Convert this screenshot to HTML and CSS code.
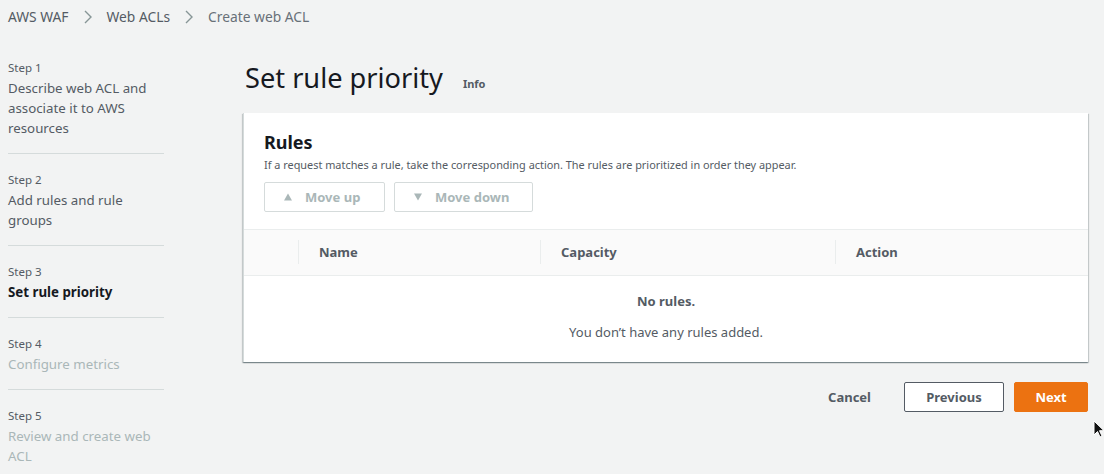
FILE: index.html
```html
<!DOCTYPE html>
<html lang="en">
<head>
<meta charset="utf-8">
<title>Set rule priority</title>
<link rel="stylesheet" href="styles.css">
</head>
<body>
<nav class="crumbs">
  <span class="crumb">AWS WAF</span>
  <svg class="chev" viewBox="0 0 10 14" width="10" height="14"><path d="M2 1l6 6-6 6" fill="none" stroke="#879596" stroke-width="1.4"/></svg>
  <span class="crumb">Web ACLs</span>
  <svg class="chev" viewBox="0 0 10 14" width="10" height="14"><path d="M2 1l6 6-6 6" fill="none" stroke="#879596" stroke-width="1.4"/></svg>
  <span class="crumb current">Create web ACL</span>
</nav>
<div class="layout">
  <aside class="steps">
    <div class="step"><div class="step-label">Step 1</div><div class="step-title">Describe web ACL and associate it to AWS resources</div></div>
    <div class="step"><div class="step-label">Step 2</div><div class="step-title">Add rules and rule groups</div></div>
    <div class="step"><div class="step-label">Step 3</div><div class="step-title active">Set rule priority</div></div>
    <div class="step"><div class="step-label">Step 4</div><div class="step-title disabled">Configure metrics</div></div>
    <div class="step last"><div class="step-label">Step 5</div><div class="step-title disabled">Review and create web ACL</div></div>
  </aside>
  <main class="main">
    <div class="page-head"><h1>Set rule priority</h1><span class="info">Info</span></div>
    <section class="card">
      <div class="card-head">
        <h2>Rules</h2>
        <p class="desc">If a request matches a rule, take the corresponding action. The rules are prioritized in order they appear.</p>
        <div class="tools">
          <button class="btn-dis"><svg viewBox="0 0 10 10" width="10" height="10"><path d="M5 1.5L9 8.5H1z" fill="#aab7b8"/></svg>Move up</button>
          <button class="btn-dis"><svg viewBox="0 0 10 10" width="10" height="10"><path d="M1 1.5h8L5 8.5z" fill="#aab7b8"/></svg>Move down</button>
        </div>
      </div>
      <div class="thead">
        <div class="th sel"></div>
        <div class="th c1"><span>Name</span></div>
        <div class="th c2"><span>Capacity</span></div>
        <div class="th c3"><span>Action</span></div>
      </div>
      <div class="empty">
        <div class="empty-title">No rules.</div>
        <div class="empty-text">You don’t have any rules added.</div>
      </div>
    </section>
    <div class="actions">
      <button class="btn-link">Cancel</button>
      <button class="btn-normal">Previous</button>
      <button class="btn-primary">Next</button>
    </div>
  </main>
</div>
<svg class="cursor" viewBox="0 0 12 18" width="12" height="18"><path d="M1 1v14l3.5-3.5 2.5 5.5 2-1-2.5-5.3H11z" fill="#111" stroke="#fff" stroke-width="1"/></svg>
</body>
</html>
```
FILE: styles.css
```css
* { box-sizing: border-box; }
html, body { margin: 0; padding: 0; }
body {
  background: #f2f3f3;
  font-family: "Noto Sans", "Open Sans", sans-serif;
  color: #16191f;
  width: 1104px;
  height: 474px;
  overflow: hidden;
  position: relative;
}
.crumbs {
  display: flex;
  align-items: center;
  height: 34px;
  padding: 0 0 0 8px;
  font-size: 13.8px;
  color: #545b64;
  gap: 12px;
}
.crumb { line-height: 34px; }
.crumb.current { color: #687078; }
.chev { margin: 0 2px; }
.layout {
  display: grid;
  grid-template-columns: 156px 1fr;
  column-gap: 79px;
  padding: 8px 16px 0 8px;
}
.step {
  padding: 18px 0 15px;
  border-bottom: 1px solid #d5dbdb;
}
.step.last { border-bottom: none; }
.step-label {
  font-size: 11.5px;
  line-height: 16px;
  color: #545b64;
  margin-bottom: 2px;
}
.step-title {
  font-size: 13.3px;
  line-height: 20px;
  color: #545b64;
}
.step-title.active { color: #16191f; font-weight: 700; }
.step-title.disabled { color: #aab7b8; }
.main { min-width: 0; }
.page-head {
  display: flex;
  align-items: baseline;
  gap: 20px;
  height: 71px;
  padding-top: 18px;
  padding-left: 2px;
}
.page-head h1 {
  margin: 0;
  font-size: 27.2px;
  font-weight: 400;
  line-height: 36px;
  color: #16191f;
}
.info {
  font-size: 11px;
  font-weight: 700;
  color: #545b64;
}
.card {
  background: #fff;
  border-left: 1px solid #d5dbdb;
  box-shadow: 0 1px 1px 0 rgba(0,28,36,0.3), 1px 1px 1px 0 rgba(0,28,36,0.15), -1px 1px 1px 0 rgba(0,28,36,0.15);
  height: 249px;
  display: flex;
  flex-direction: column;
}
.card-head { padding: 17px 20px 17px 20px; }
.card-head h2 {
  margin: 0;
  font-size: 18px;
  line-height: 24px;
  font-weight: 700;
  color: #16191f;
}
.desc {
  margin: 3px 0 0;
  font-size: 10.9px;
  line-height: 16px;
  color: #545b64;
}
.tools { display: flex; gap: 9px; margin-top: 9px; }
.btn-dis {
  height: 30px;
  border: 1px solid #d5dbdb;
  background: #fff;
  border-radius: 2px;
  font-family: inherit;
  font-size: 13px;
  font-weight: 700;
  color: #aab7b8;
  display: flex;
  align-items: center;
  gap: 12px;
  padding: 0 18px;
}
.btn-dis:first-child { width: 121px; }
.btn-dis:last-child { width: 139px; }
.thead {
  display: grid;
  grid-template-columns: 54px 242px 295px 1fr;
  height: 47px;
  background: #fafafa;
  border-top: 1px solid #eaeded;
  border-bottom: 1px solid #eaeded;
  align-items: center;
}
.th {
  height: 24px;
  display: flex;
  align-items: center;
  font-size: 13px;
  font-weight: 700;
  color: #545b64;
  padding-left: 20px;
  margin-top: -1px;
}
.th.c1, .th.c2, .th.c3 { border-left: 1px solid #eaeded; }
.empty {
  flex: 1;
  text-align: center;
  color: #545b64;
  font-size: 13px;
  padding-top: 15px;
}
.empty-title { font-weight: 700; line-height: 20px; }
.empty-text { line-height: 20px; margin-top: 11px; }
.actions {
  display: flex;
  justify-content: flex-end;
  align-items: center;
  gap: 10px;
  margin-top: 20px;
}
.actions button {
  height: 30px;
  font-family: inherit;
  font-size: 13px;
  font-weight: 700;
  border-radius: 2px;
  cursor: pointer;
}
.btn-link {
  background: transparent;
  border: none;
  color: #545b64;
  padding: 0 20px;
  margin-right: 3px;
}
.btn-normal {
  background: #fff;
  border: 1px solid #545b64;
  color: #545b64;
  width: 100px;
}
.btn-primary {
  background: #ec7211;
  border: 1px solid #ec7211;
  color: #fff;
  width: 74px;
}
.cursor {
  position: absolute;
  left: 1093px;
  top: 420px;
}
```
